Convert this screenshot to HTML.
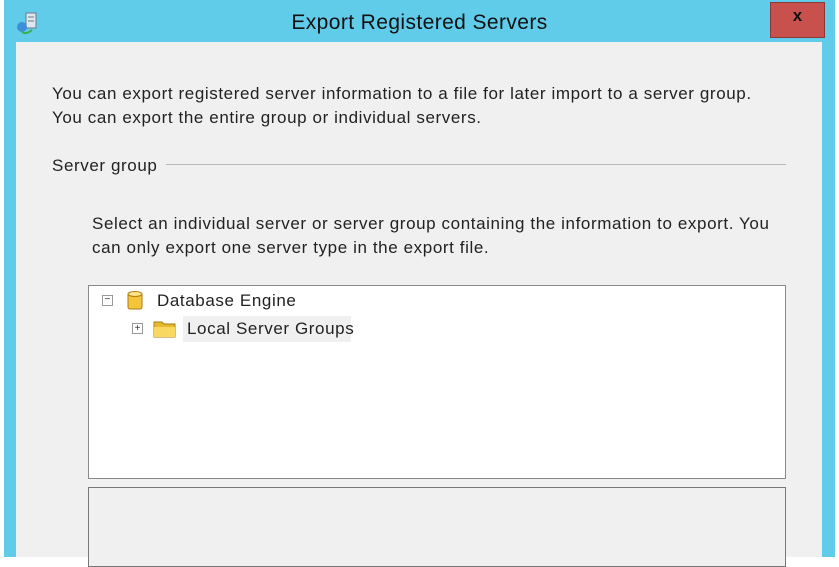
<!DOCTYPE html>
<html><head><style>
html,body{margin:0;width:839px;height:557px;overflow:hidden;background:#fff;font-family:"Liberation Sans",sans-serif;}
.frame{position:absolute;left:4px;top:0;width:831px;height:557px;background:#61cbea;}
.content{position:absolute;left:16px;top:42px;width:806px;height:515px;background:#f0f0f0;}
.title{position:absolute;left:0;width:839px;top:11px;text-align:center;font-size:21px;letter-spacing:0.4px;color:#111;}
.close{position:absolute;left:770px;top:2px;width:55px;height:36px;background:#c8514d;border:1px solid #8a3a36;box-sizing:border-box;color:#111;font-weight:bold;font-size:17px;text-align:center;line-height:26px;}
.t{position:absolute;font-size:17px;letter-spacing:0.6px;color:#222;line-height:24px;white-space:nowrap;}
.box{position:absolute;border:1px solid #8a8a8a;box-sizing:border-box;}
</style></head><body>
<div class="frame"></div>
<div class="content"></div>
<svg style="position:absolute;left:16px;top:12px" width="26" height="24"><rect x="10" y="1" width="10" height="15" fill="#dfe6ee" stroke="#6a7a8a"/><line x1="12" y1="5" x2="18" y2="5" stroke="#6a7a8a"/><line x1="12" y1="9" x2="18" y2="9" stroke="#6a7a8a"/><circle cx="6" cy="15" r="5" fill="#3c8fd8"/><path d="M6 20 Q10 23 16 18" stroke="#3bb04a" stroke-width="2" fill="none"/></svg>
<div class="title">Export Registered Servers</div>
<div class="close">x</div>
<div class="t" style="left:52px;top:82px">You can export registered server information to a file for later import to a server group.<br>You can export the entire group or individual servers.</div>
<div class="t" style="left:52px;top:154px">Server group</div>
<div style="position:absolute;left:166px;top:164px;width:620px;height:1px;background:#b8b8b8"></div>
<div class="t" style="left:92px;top:212px">Select an individual server or server group containing the information to export. You<br>can only export one server type in the export file.</div>
<div class="box" style="left:88px;top:285px;width:698px;height:194px;background:#fff"></div>
<div class="box" style="left:88px;top:487px;width:698px;height:80px;background:#f0f0f0;border-color:#777"></div>
<div style="position:absolute;left:102px;top:295px;width:9px;height:9px;border:1px solid #999;font-size:10px;line-height:8px;text-align:center;color:#333">−</div>
<svg style="position:absolute;left:126px;top:290px" width="18" height="22"><rect x="2" y="3" width="14" height="16" rx="2" fill="#f2c53a" stroke="#b07a10"/><ellipse cx="9" cy="4" rx="7" ry="2.5" fill="#fbe58a" stroke="#b07a10"/></svg>
<div class="t" style="left:157px;top:289px">Database Engine</div>
<div style="position:absolute;left:132px;top:323px;width:9px;height:9px;border:1px solid #999;font-size:10px;line-height:9px;text-align:center;color:#333">+</div>
<svg style="position:absolute;left:153px;top:319px" width="24" height="20"><path d="M1 3h8l2 2h11v13H1z" fill="#e8b830" stroke="#a67c10"/><path d="M1 8h21v10H1z" fill="#f8d860"/></svg>
<div style="position:absolute;left:183px;top:316px;width:168px;height:26px;background:#f0f0f0"></div>
<div class="t" style="left:187px;top:317px">Local Server Groups</div>
</body></html>
